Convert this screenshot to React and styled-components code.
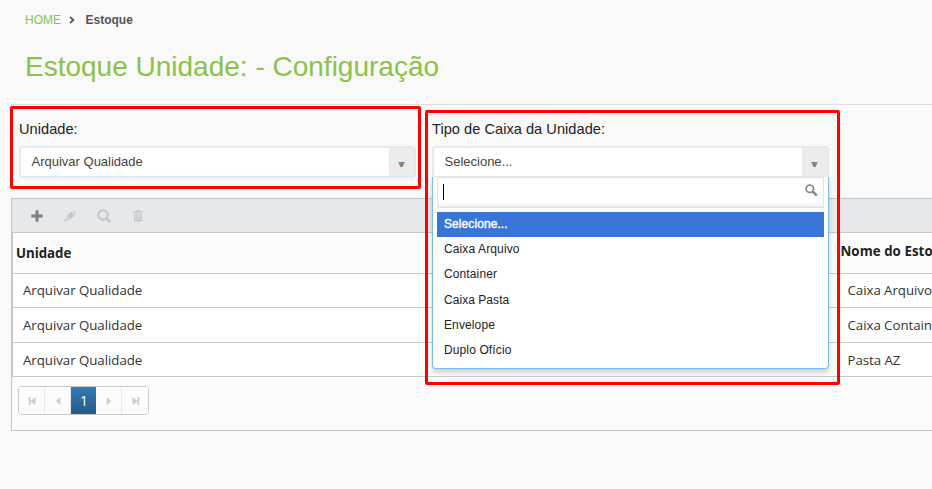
import React from 'react';
import styled, { createGlobalStyle } from 'styled-components';

const GlobalStyle = createGlobalStyle`
  *, *::before, *::after { box-sizing: border-box; }
  body { margin: 0; background: #f9f9f9; overflow: hidden; font-family: "Liberation Sans", Arial, sans-serif; }
`;

const Page = styled.main`
  width: 932px;
  height: 489px;
  overflow: hidden;
  background: #f9f9f9;
`;

const PageHeader = styled.header`
  height: 105px;
  margin-left: 11px;
  padding: 12px 0 0 14px;
  border-bottom: 1px solid #dedede;
`;

const Breadcrumb = styled.nav`
  display: flex;
  align-items: center;
  height: 16px;
  font-size: 12px;
  line-height: 16px;
  color: #555;
  svg { margin: 0 11px 0 7.5px; }
`;

const HomeLink = styled.a`
  color: #8bc34a;
`;

const Title = styled.h1`
  margin: 22px 0 0;
  font-size: 28px;
  line-height: 34px;
  font-weight: 400;
  color: #8bc34a;
`;

const Filters = styled.section`
  display: flex;
  align-items: flex-start;
  gap: 4px;
  height: 93px;
  padding: 1px 0 0 10px;
`;

const Highlight = styled.div`
  position: relative;
  z-index: 2;
  flex: none;
  width: ${(p) => p.$width}px;
  height: ${(p) => p.$height}px;
  margin-top: ${(p) => p.$top || 0}px;
  padding: ${(p) => p.$pad};
  border: 3px solid #fe0000;
  border-radius: 2px;
`;

const Label = styled.div`
  height: 18px;
  margin-bottom: 8px;
  font-size: 14.6px;
  line-height: 18px;
  color: #222;
  letter-spacing: 0.03px;
`;

const Select = styled.div`
  display: flex;
  width: 397px;
  height: 32px;
  border: 2px solid #e5e9ec;
  border-radius: 4px;
  background: #fff;
  overflow: hidden;
`;

const SelectValue = styled.span`
  flex: 1;
  padding-left: 10.5px;
  font-size: 13px;
  line-height: 27px;
  color: #444;
`;

const SelectArrow = styled.span`
  display: flex;
  justify-content: center;
  width: 25px;
  padding-top: 14px;
  background: #ececec;
`;

const Dropdown = styled.div`
  position: absolute;
  top: 64px;
  left: 4px;
  width: 397px;
  height: 192px;
  padding: 0 4px;
  border: 1px solid #79bce8;
  border-top: 0;
  border-radius: 0 0 4px 4px;
  background: #fff;
  box-shadow: 0 4px 5px rgba(0, 0, 0, 0.18);
`;

const SearchField = styled.div`
  display: flex;
  justify-content: space-between;
  height: 31px;
  padding: 6px 5px 0 5px;
  border: 1px solid #e3e3e3;
  background: linear-gradient(#fff 85%, #eee 99%);
`;

const Caret = styled.span`
  width: 1px;
  height: 16px;
  background: #000;
`;

const Options = styled.ul`
  margin: 4px 0 0;
  padding: 0;
  list-style: none;
`;

const Option = styled.li`
  height: 25.2px;
  padding-left: 7px;
  font-size: 12px;
  line-height: 24px;
  letter-spacing: ${(p) => p.$spacing || 0}px;
  -webkit-text-stroke: ${(p) => (p.$active ? '0.4px' : '0')};
  color: ${(p) => (p.$active ? '#fff' : '#222')};
  background: ${(p) => (p.$active ? '#3875d7' : 'transparent')};
`;

const GridPanel = styled.section`
  width: 1040px;
  height: 233px;
  margin-left: 11px;
  border: 1px solid #c4c5c6;
  background: #fcfcfc;
  font-family: "Open Sans", "Noto Sans", sans-serif;
`;

const Toolbar = styled.div`
  display: flex;
  align-items: center;
  gap: 17.5px;
  height: 34px;
  padding-left: 17px;
  background: #e5e9ec;
  border-bottom: 1px solid #c8c8c8;
`;

const ToolButton = styled.button`
  display: flex;
  align-items: center;
  justify-content: center;
  width: 16px;
  height: 20px;
  padding: 0;
  border: 0;
  background: none;
  color: ${(p) => (p.$enabled ? '#7d7f82' : '#c3c7ca')};
`;

const Row = styled.div`
  display: grid;
  grid-template-columns: 824.5px 1fr;
  height: ${(p) => p.$height}px;
  border-left: 1px solid #c8c8c8;
  border-bottom: 1px solid #c8c8c8;
  background: ${(p) => (p.$head ? '#fcfcfc' : '#fff')};
`;

const HeadCell = styled.div`
  padding: ${(p) => p.$top}px 0 0 3px;
  font-size: 13.3px;
  line-height: 20px;
  font-weight: 700;
  letter-spacing: ${(p) => p.$spacing}px;
  white-space: nowrap;
  color: #222;
`;

const Cell = styled.div`
  padding: ${(p) => p.$top}px 0 0 10px;
  font-size: 13.3px;
  line-height: 20px;
  letter-spacing: -0.05px;
  white-space: nowrap;
  color: #333;
`;

const Pager = styled.div`
  display: flex;
  width: 131px;
  height: 29px;
  margin: 9px 0 0 6px;
  border: 1px solid #c8c8c8;
  border-radius: 4px;
  overflow: hidden;
`;

const PageButton = styled.button`
  display: flex;
  align-items: center;
  justify-content: center;
  width: 26px;
  padding: 0 0 0 1px;
  border: 0;
  border-right: 1px solid #e9e9e9;
  font: 14px "Open Sans", sans-serif;
  color: ${(p) => (p.$current ? '#fff' : '#ccc')};
  background: ${(p) => (p.$current ? 'linear-gradient(#337ab7, #265a88)' : '#fcfcfc')};
  ${(p) => p.$current && 'border-right: 0; padding-bottom: 1px;'}
  &:last-child { border-right: 0; }
`;

const DownArrow = () => (
  <svg width="7" height="6" viewBox="0 0 7 6"><path d="M.3 0h6.4L4.6 5H2.4z" fill="#858585" /></svg>
);

const Chevron = () => (
  <svg width="6" height="8" viewBox="0 0 6 8"><path d="M1 .8 4.3 4 1 7.2" fill="none" stroke="#555" strokeWidth="1.8" /></svg>
);

const SearchIcon = () => (
  <svg width="13" height="13" viewBox="0 0 13 13" fill="none" stroke="#858585">
    <circle cx="4.8" cy="4.7" r="3.7" strokeWidth="1.7" />
    <path d="m7.7 7.6 4.2 4.1" strokeWidth="2.4" />
  </svg>
);

const PlusIcon = () => (
  <svg width="12" height="12" viewBox="0 0 12 12"><path d="M4.5.3h3v4.2h4.2v3H7.5v4.2h-3V7.5H.3v-3h4.2z" fill="currentColor" /></svg>
);

const PencilIcon = () => (
  <svg width="13" height="12" viewBox="0 0 13 12" fill="currentColor">
    <path d="m7.4 1.7 3.5 3.5-4.7 4.3-3.4-3.4zM8.9 1.1 10 .2l2.6 2.7-1 1zM2.4 7l3.2 3.2-3.2.2z" />
    <path d="M.3 9.6h1.9v1.8H.3z" />
  </svg>
);

const ZoomIcon = () => (
  <svg width="14" height="14" viewBox="0 0 14 14" fill="none" stroke="currentColor">
    <circle cx="6" cy="6" r="4.7" strokeWidth="2.2" />
    <path d="m9.3 9.3 3.6 3.6" strokeWidth="2.8" />
  </svg>
);

const TrashIcon = () => (
  <svg width="10" height="12" viewBox="0 0 10 12" fill="none" stroke="currentColor">
    <path d="M.5 2h9M3.2 1h3.6" strokeWidth="1.4" />
    <path d="M1.7 3.5v7.4h6.6V3.5M3.9 3.5v7M6.1 3.5v7" strokeWidth="1.35" />
  </svg>
);

const PagerArrow = ({ bar, flip }) => (
  <svg width="8" height="8" viewBox="0 0 8 8">
    <g fill="currentColor" transform={flip ? 'translate(8 0) scale(-1 1)' : undefined}>
      <path d={bar ? 'M7.5 0v8L2.4 4z' : 'M6.3 0v8L1.8 4z'} />
      {bar && <path d="M.8 0h1.8v8H.8z" />}
    </g>
  </svg>
);

const options = [
  ['Selecione...', 0.08],
  ['Caixa Arquivo', 0.12],
  ['Container', 0.12],
  ['Caixa Pasta', 0.05],
  ['Envelope', 0.12],
  ['Duplo Ofício', 0.12],
];

const rows = [
  ['Caixa Arquivo', 34, 6],
  ['Caixa Container', 35, 7],
  ['Pasta AZ', 34, 7],
];

export default function App() {
  return (
    <Page>
      <GlobalStyle />
      <PageHeader>
        <Breadcrumb>
          <HomeLink>HOME</HomeLink>
          <Chevron />
          <b>Estoque</b>
        </Breadcrumb>
        <Title>Estoque Unidade: - Configuração</Title>
      </PageHeader>
      <Filters>
        <Highlight $width={411} $height={83} $pad="11px 0 0 6px">
          <Label>Unidade:</Label>
          <Select>
            <SelectValue>Arquivar Qualidade</SelectValue>
            <SelectArrow><DownArrow /></SelectArrow>
          </Select>
        </Highlight>
        <Highlight $width={415} $height={275} $top={4} $pad="7px 0 0 4px">
          <Label>Tipo de Caixa da Unidade:</Label>
          <Select>
            <SelectValue>Selecione...</SelectValue>
            <SelectArrow><DownArrow /></SelectArrow>
          </Select>
          <Dropdown>
            <SearchField><Caret /><SearchIcon /></SearchField>
            <Options>
              {options.map(([name, spacing], i) => (
                <Option key={name} $active={i === 0} $spacing={spacing}>{name}</Option>
              ))}
            </Options>
          </Dropdown>
        </Highlight>
      </Filters>
      <GridPanel>
        <Toolbar>
          <ToolButton $enabled aria-label="Adicionar"><PlusIcon /></ToolButton>
          <ToolButton aria-label="Editar"><PencilIcon /></ToolButton>
          <ToolButton aria-label="Visualizar"><ZoomIcon /></ToolButton>
          <ToolButton aria-label="Excluir"><TrashIcon /></ToolButton>
        </Toolbar>
        <Row $head $height={41}>
          <HeadCell $top={10} $spacing={-0.05}>Unidade</HeadCell>
          <HeadCell $top={8} $spacing={0.05}>Nome do Estoque</HeadCell>
        </Row>
        {rows.map(([name, height, top]) => (
          <Row key={name} $height={height}>
            <Cell $top={top}>Arquivar Qualidade</Cell>
            <Cell $top={top}>{name}</Cell>
          </Row>
        ))}
        <Pager>
          <PageButton aria-label="Primeira"><PagerArrow bar /></PageButton>
          <PageButton aria-label="Anterior"><PagerArrow /></PageButton>
          <PageButton $current>1</PageButton>
          <PageButton aria-label="Próxima"><PagerArrow flip /></PageButton>
          <PageButton aria-label="Última"><PagerArrow bar flip /></PageButton>
        </Pager>
      </GridPanel>
    </Page>
  );
}
